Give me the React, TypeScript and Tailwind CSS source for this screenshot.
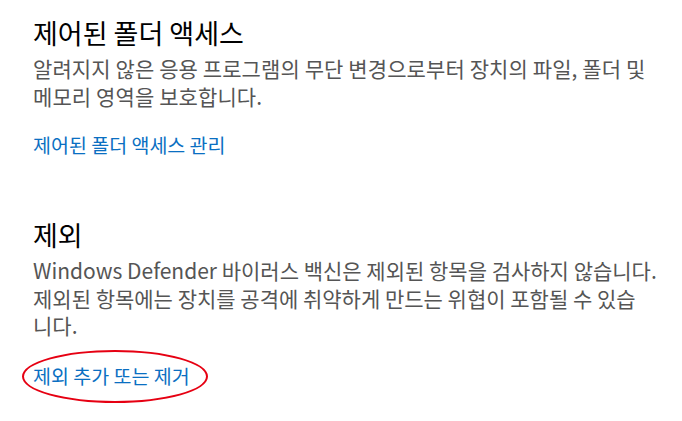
export default function App() {
  return (
    <div
      className="w-[682px] h-[421px] bg-white overflow-hidden pl-[33px] pt-[15px]"
      style={{ fontFamily: '"Noto Sans CJK KR", "Noto Sans", sans-serif' }}
    >
      {/* 제어된 폴더 액세스 */}
      <h2 className="text-[27px] leading-[36px] text-black">제어된 폴더 액세스</h2>
      <p className="mt-[3px] text-[21px] leading-[28px] text-[#555555] whitespace-nowrap tracking-[0.1px]">
        알려지지 않은 응용 프로그램의 무단 변경으로부터 장치의 파일, 폴더 및
        <br />
        메모리 영역을 보호합니다.
      </p>
      <a className="block mt-[21px] text-[19.5px] leading-[28px] text-[#0a6fc2]">제어된 폴더 액세스 관리</a>

      {/* 제외 */}
      <h2 className="mt-[58px] text-[27px] leading-[36px] text-black">제외</h2>
      <p className="mt-[4px] text-[21px] leading-[27.5px] text-[#555555] whitespace-nowrap">
        Windows Defender 바이러스 백신은 제외된 항목을 검사하지 않습니다.
        <br />
        제외된 항목에는 장치를 공격에 취약하게 만드는 위협이 포함될 수 있습
        <br />
        니다.
      </p>
      <div className="relative mt-[22px] inline-block">
        <a className="block text-[19.5px] leading-[28px] text-[#0a6fc2]">제외 추가 또는 제거</a>
        <div className="absolute left-[-11px] right-[-18px] top-[-12px] bottom-[-13px] rounded-[50%] border-2 border-[#e60012]" />
      </div>
    </div>
  )
}
